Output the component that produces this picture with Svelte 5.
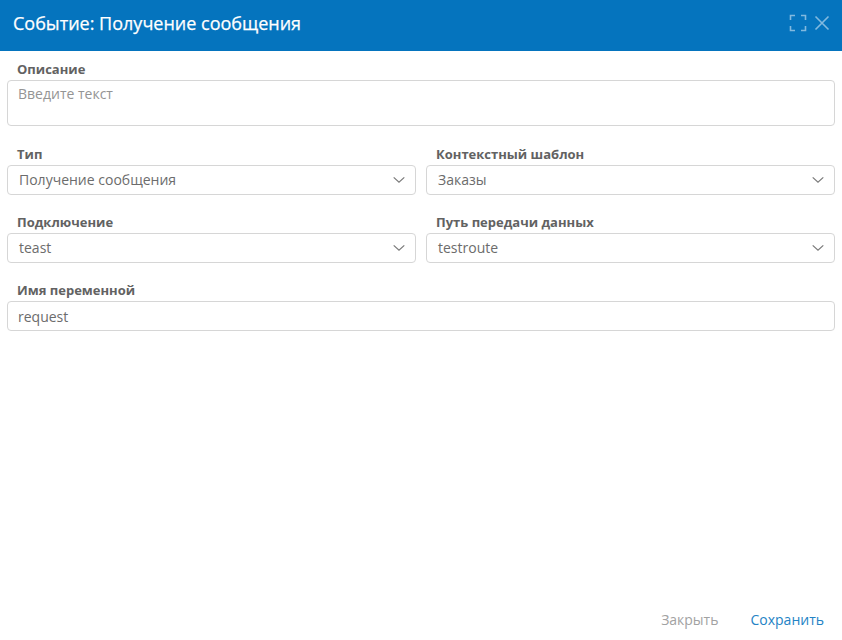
<script>
  const rows = [
    [
      { id: 'type', label: 'Тип', value: 'Получение сообщения' },
      { id: 'template', label: 'Контекстный шаблон', value: 'Заказы' }
    ],
    [
      { id: 'connection', label: 'Подключение', value: 'teast' },
      { id: 'route', label: 'Путь передачи данных', value: 'testroute' }
    ]
  ];
</script>

<div class="dialog">
  <header>
    <h1>Событие: Получение сообщения</h1>
    <div class="tools">
      <svg width="18" height="18" viewBox="0 0 18 18">
        <path d="M1.5 6V1.5H6M12 1.5h4.500V6M16.500 12v4.500H12M6 16.500H1.500V12" />
      </svg>
      <svg width="16" height="16" viewBox="0 0 16 16">
        <path d="M1.500 1.500l13 13M14.500 1.500l-13 13" />
      </svg>
    </div>
  </header>

  <main>
    <div class="field description">
      <label for="description">Описание</label>
      <textarea id="description" placeholder="Введите текст"></textarea>
    </div>
    {#each rows as row}
      <div class="row">
        {#each row as item (item.id)}
          <div class="field">
            <label for={item.id}>{item.label}</label>
            <button type="button" class="select" id={item.id}>
              <span>{item.value}</span>
              <svg width="12" height="8" viewBox="0 0 12 8"><path d="M.7 1.400L6 6.300l5.300-4.900" /></svg>
            </button>
          </div>
        {/each}
      </div>
    {/each}
    <div class="field">
      <label for="variable">Имя переменной</label>
      <input id="variable" value="request" />
    </div>
  </main>

  <footer>
    <button type="button" class="close">Закрыть</button>
    <button type="button" class="save">Сохранить</button>
  </footer>
</div>

<style>
  .dialog {
    height: 640px;
    display: flex;
    flex-direction: column;
    background: #fff;
    color: #666;
    font-family: 'Open Sans', 'Noto Sans', sans-serif;
    font-size: 14px;
    overflow: hidden;
  }
  * {
    box-sizing: border-box;
  }
  header {
    height: 51px;
    flex: none;
    display: flex;
    align-items: center;
    justify-content: space-between;
    padding: 0 12px 5px 13px;
    background: #0574be;
  }
  h1 {
    margin: 0;
    color: #fff;
    font-size: 18px;
    line-height: 24px;
    font-weight: 400;
    -webkit-text-stroke: 0.25px #fff;
  }
  .tools {
    display: flex;
    align-items: center;
    gap: 7.500px;
  }
  svg {
    display: block;
    fill: none;
  }
  .tools svg {
    stroke: #82b9df;
    stroke-width: 1.6;
  }
  main {
    flex: 1;
    padding: 9px 7px 0;
  }
  .row {
    display: flex;
    gap: 10px;
  }
  .field {
    flex: 1;
    min-width: 0;
    height: 68px;
    display: flex;
    flex-direction: column;
  }
  .description {
    height: 85px;
  }
  label {
    height: 20px;
    flex: none;
    padding-left: 10px;
    font-size: 13px;
    line-height: 19px;
    font-weight: 700;
    color: #626262;
  }
  textarea,
  input,
  .select {
    display: block;
    width: 100%;
    margin: 0;
    border: 1px solid #d6d6d6;
    border-radius: 4px;
    background: #fff;
    color: #6c6c6c;
    font: inherit;
    outline: none;
  }
  textarea {
    height: 46px;
    padding: 3px 10px;
    line-height: 20px;
    resize: none;
  }
  textarea::placeholder {
    color: #949494;
  }
  input {
    height: 30px;
    padding: 0 10px;
  }
  .select {
    height: 30px;
    padding: 0 10px 0 11px;
    display: flex;
    align-items: center;
    justify-content: space-between;
  }
  .select span {
    padding-bottom: 2px;
  }
  .select svg {
    stroke: #7a7a7a;
    stroke-width: 1.2;
  }
  footer {
    display: flex;
    justify-content: flex-end;
    gap: 32px;
    padding: 0 18px 10px 0;
  }
  footer button {
    border: 0;
    padding: 0;
    background: none;
    font: inherit;
    line-height: 20px;
  }
  .close {
    color: #a2a2a2;
  }
  .save {
    color: #2483c5;
  }
</style>
